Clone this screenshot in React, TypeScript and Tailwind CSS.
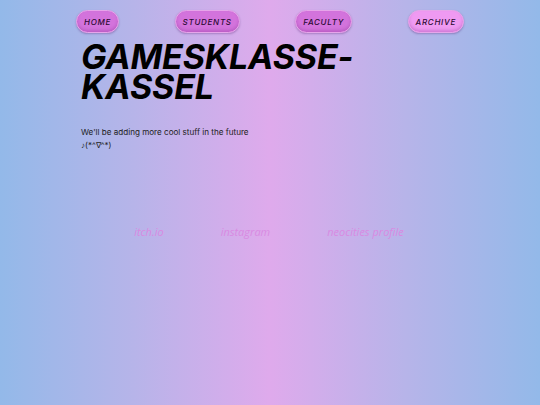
const navItems = [
  { label: 'HOME', active: false },
  { label: 'STUDENTS', active: false },
  { label: 'FACULTY', active: false },
  { label: 'ARCHIVE', active: true },
];

const links = ['itch.io', 'instagram', 'neocities profile'];

export default function App() {
  return (
    <div className="min-h-[405px] w-full bg-[linear-gradient(90deg,#93b9e9_0%,#b7b4e9_25%,#dfaaec_50%,#b7b4e9_75%,#93b9e9_100%)] font-['Inter',sans-serif]">
      <div className="mx-auto w-[388px] pt-[10px]">
        <nav className="flex items-center justify-between">
          {navItems.map((item) => (
            <a
              key={item.label}
              className={
                'flex h-[23px] items-center rounded-full border border-[#e6a6ea] px-[7px] text-[8px] font-medium italic tracking-[0.09em] text-[#2b0a33] shadow-[0_1px_2px_rgba(90,40,120,0.35),inset_0_-2px_3px_rgba(120,30,130,0.25)] ' +
                (item.active ? 'bg-[#ef9af2]' : 'bg-[#d373dc]')
              }
            >
              {item.label}
            </a>
          ))}
        </nav>
        <div className="pl-[5px]">
          <h1 className="mt-[9px] text-[34px] font-bold italic leading-[30px] tracking-[-0.005em] text-black">
            GAMESKLASSE-
            <br />
            KASSEL
          </h1>
          <p className="mt-[24px] text-[8.1px] leading-[13px] text-[#222]">
            We'll be adding more cool stuff in the future
            <br />
            <span className="text-[8px]">♪(*^∇^*)</span>
          </p>
        </div>
        <div className="mt-[72px] flex justify-center gap-[57px] pr-[2px] font-['Open_Sans',sans-serif] text-[11px] font-medium italic text-[#d98ae2]">
          {links.map((link) => (
            <a key={link}>{link}</a>
          ))}
        </div>
      </div>
    </div>
  );
}
